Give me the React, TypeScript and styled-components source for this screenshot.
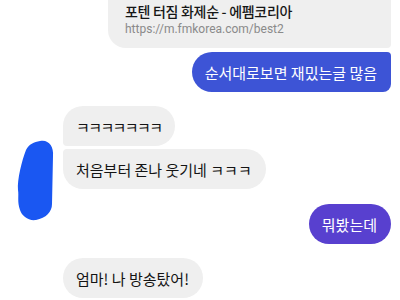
import styled, { createGlobalStyle } from 'styled-components';

const GlobalStyle = createGlobalStyle`
  html, body {
    margin: 0;
    padding: 0;
    background: #ffffff;
    overflow: hidden;
  }
  body {
    font-family: "Noto Sans CJK KR", "Noto Sans", Roboto, sans-serif;
  }
`;

const Thread = styled.div`
  width: 400px;
  height: 300px;
  overflow: hidden;
  display: flex;
  flex-direction: column;
  padding-right: 9px;
  box-sizing: border-box;
`;

const Outgoing = styled.div<{ $top?: number }>`
  display: flex;
  flex-direction: column;
  align-items: flex-end;
  gap: 4px;
  margin-top: ${(p) => p.$top ?? 0}px;
`;

const LinkCard = styled.div`
  width: 283px;
  margin-top: -20px;
  padding: 21px 17px 0;
  height: 68px;
  box-sizing: border-box;
  background: #efefef;
  border-radius: 18px 18px 4px 18px;
`;

const LinkTitle = styled.div`
  font-size: 14px;
  font-weight: 500;
  letter-spacing: -0.3px;
  color: #161616;
  line-height: 20px;
  white-space: nowrap;
`;

const LinkUrl = styled.div`
  font-family: Roboto, "Liberation Sans", sans-serif;
  font-size: 12px;
  color: #8a8a8a;
  line-height: 18px;
  margin-top: -1px;
`;

type BubbleProps = {
  $tone: 'gray' | 'blue' | 'purple';
  $radius: string;
  $spacing?: number;
};

const toneColor = { gray: '#efefef', blue: '#3d54d6', purple: '#5840cf' };

const Bubble = styled.div<BubbleProps>`
  height: 40px;
  box-sizing: border-box;
  display: flex;
  align-items: center;
  padding: 0 14px 0 13px;
  font-size: 15px;
  letter-spacing: ${(p) => p.$spacing ?? 0}px;
  white-space: nowrap;
  background: ${(p) => toneColor[p.$tone]};
  color: ${(p) => (p.$tone === 'gray' ? '#141414' : '#ffffff')};
  border-radius: ${(p) => p.$radius};
`;

const IncomingGroup = styled.div<{ $top: number }>`
  position: relative;
  display: flex;
  flex-direction: column;
  align-items: flex-start;
  gap: 3px;
  padding-left: 63px;
  margin-top: ${(p) => p.$top}px;
`;

const Scribble = styled.svg`
  position: absolute;
  left: 14px;
  top: 30px;
`;

function App() {
  return (
    <>
      <GlobalStyle />
      <Thread>
        <Outgoing>
          <LinkCard>
            <LinkTitle>포텐 터짐 화제순 - 에펨코리아</LinkTitle>
            <LinkUrl>https://m.fmkorea.com/best2</LinkUrl>
          </LinkCard>
          <Bubble $tone="blue" $radius="20px 4px 8px 20px">
            순서대로보면 재밌는글 많음
          </Bubble>
        </Outgoing>
        <IncomingGroup $top={14}>
          <Bubble $tone="gray" $radius="20px 20px 20px 4px" $spacing={-1.6}>
            ㅋㅋㅋㅋㅋㅋㅋ
          </Bubble>
          <Bubble $tone="gray" $radius="4px 20px 20px 20px">
            처음부터 존나 웃기네 ㅋㅋㅋ
          </Bubble>
          <Scribble width="44" height="88" viewBox="0 0 44 88">
            <path
              d="M26 5 C34 3 40 10 39 20 L38 68 C38 76 32 82 22 84 C14 85 8 80 6 74 C3 66 5 60 4 54 C3 44 8 24 12 14 C15 8 20 6 26 5 Z"
              fill="#1a57f2"
            />
          </Scribble>
        </IncomingGroup>
        <Outgoing $top={15}>
          <Bubble $tone="purple" $radius="20px">
            뭐봤는데
          </Bubble>
        </Outgoing>
        <IncomingGroup $top={14}>
          <Bubble $tone="gray" $radius="20px">
            엄마! 나 방송탔어!
          </Bubble>
        </IncomingGroup>
      </Thread>
    </>
  );
}

export default App;
